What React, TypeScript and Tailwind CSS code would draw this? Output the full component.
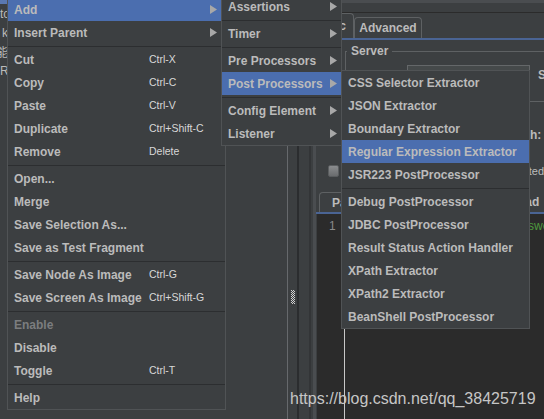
import React from "react";

type Entry = {
  label: string;
  shortcut?: string;
  sub?: boolean;
  active?: boolean;
  disabled?: boolean;
} | null;

const mainItems: Entry[] = [
  { label: "Add", sub: true, active: true },
  { label: "Insert Parent", sub: true },
  null,
  { label: "Cut", shortcut: "Ctrl-X" },
  { label: "Copy", shortcut: "Ctrl-C" },
  { label: "Paste", shortcut: "Ctrl-V" },
  { label: "Duplicate", shortcut: "Ctrl+Shift-C" },
  { label: "Remove", shortcut: "Delete" },
  null,
  { label: "Open..." },
  { label: "Merge" },
  { label: "Save Selection As..." },
  { label: "Save as Test Fragment" },
  null,
  { label: "Save Node As Image", shortcut: "Ctrl-G" },
  { label: "Save Screen As Image", shortcut: "Ctrl+Shift-G" },
  null,
  { label: "Enable", disabled: true },
  { label: "Disable" },
  { label: "Toggle", shortcut: "Ctrl-T" },
  null,
  { label: "Help" },
];

const addItems: Entry[] = [
  { label: "Assertions", sub: true },
  null,
  { label: "Timer", sub: true },
  null,
  { label: "Pre Processors", sub: true },
  { label: "Post Processors", sub: true, active: true },
  null,
  { label: "Config Element", sub: true },
  { label: "Listener", sub: true },
];

const postItems: Entry[] = [
  { label: "CSS Selector Extractor" },
  { label: "JSON Extractor" },
  { label: "Boundary Extractor" },
  { label: "Regular Expression Extractor", active: true },
  { label: "JSR223 PostProcessor" },
  null,
  { label: "Debug PostProcessor" },
  { label: "JDBC PostProcessor" },
  { label: "Result Status Action Handler" },
  { label: "XPath Extractor" },
  { label: "XPath2 Extractor" },
  { label: "BeanShell PostProcessor" },
];

const font = "font-['Liberation_Sans',Arial,sans-serif]";

function Arrow() {
  return (
    <svg width="7" height="9" viewBox="0 0 7 9" className="ml-auto shrink-0">
      <path d="M0 0L7 4.5L0 9Z" fill="#a8a8a8" />
    </svg>
  );
}

function Menu({ items, box, labelW, pr }: { items: Entry[]; box: string; labelW: string; pr: string }) {
  return (
    <div className={`absolute flex flex-col border border-[#505355] bg-[#3c3f41] ${box}`}>
      {items.map((e, i) =>
        e === null ? (
          <div key={i} className="h-[4px] pt-[2px]">
            <div className="h-px bg-[#2c2e30]" />
          </div>
        ) : (
          <div
            key={i}
            className={`flex h-[23px] shrink-0 items-center pl-[6px] ${pr} ${e.active ? "bg-[#4b6eaf]" : ""}`}
          >
            <span
              className={`${labelW} shrink-0 whitespace-nowrap text-[12px] font-bold ${
                e.disabled ? "text-[#7b7d7f]" : "text-[#bbbbbb]"
              }`}
            >
              {e.label}
            </span>
            {e.shortcut && <span className="whitespace-nowrap text-[10.5px] text-[#d8d8d8]">{e.shortcut}</span>}
            {e.sub && <Arrow />}
          </div>
        )
      )}
    </div>
  );
}

function Grip() {
  const dots = [];
  for (let y = 0; y < 14; y++) {
    for (let x = 0; x < 4; x++) {
      if ((x + y) % 2 === 0) dots.push(<rect key={`${x}-${y}`} x={x} y={y} width="1" height="1" fill="#d0d0d0" />);
    }
  }
  return (
    <svg width="4" height="14" viewBox="0 0 4 14">
      {dots}
    </svg>
  );
}

export default function App() {
  return (
    <div className={`relative flex h-[419px] w-[544px] overflow-hidden bg-[#3c3f41] ${font}`}>
      {/* tree strip, cut off by the menu */}
      <div className="flex w-[7px] shrink-0 flex-col overflow-hidden text-[12px] text-[#bbbbbb]">
        <div className="h-[4px] bg-[#5a78b0]" />
        <div className="flex h-[19px] items-center whitespace-nowrap">to</div>
        <div className="flex h-[19px] items-center whitespace-nowrap pl-[2px]">k</div>
        <div className="flex h-[19px] items-center whitespace-nowrap ml-[-4px] font-['Noto_Sans_CJK_SC',sans-serif]">能</div>
        <div className="flex h-[19px] items-center whitespace-nowrap">Re</div>
      </div>

      {/* tree panel */}
      <div className="w-[280px] shrink-0 bg-[#3c3f41]" />

      {/* split bar */}
      <div className="flex w-[29px] shrink-0">
        <div className="w-px bg-[#66696c]" />
        <div className="flex w-[9px] justify-center pt-[290px]">
          <Grip />
        </div>
        <div className="w-[2px] bg-[#2b2d2f]" />
        <div className="w-[10px]" />
        <div className="w-[2px] bg-[#333537]" />
        <div className="w-[2px]" />
        <div className="w-[3px] bg-[#4a4d50]" />
      </div>

      {/* sampler panel */}
      <div className="flex min-w-0 flex-1 flex-col overflow-hidden text-[12px] text-[#bbbbbb]">
        <div className="h-[3px] bg-[#4a4d50]" />
        <div className="h-[9px]" />
        <div className="h-px bg-[#2b2b2b]" />
        <div className="flex h-[25px] items-end">
          <div className="flex h-[25px] w-[38px] items-center justify-end overflow-hidden rounded-tr-[4px] border-r border-t border-[#5e6163] pr-[7px] font-bold">
            Basic
          </div>
          <div className="flex h-[21px] w-[68px] items-center justify-center rounded-t-[4px] border border-b-0 border-[#5e6163] font-bold">
            Advanced
          </div>
        </div>
        <div className="h-[2px] bg-[#4a6494]" />

        <fieldset className="mr-[-10px] ml-[29px] mt-[2px] border border-[#5e6163] px-0 pb-[16px]">
          <legend className="ml-px px-[4px] text-[12px] font-bold">Server</legend>
          <div className="mt-[5px] flex h-[20px] items-center">
            <span className="w-[61px] overflow-hidden whitespace-nowrap text-right font-bold">col [http]:</span>
            <div className="h-[20px] w-[123px] border border-[#646769] bg-[#45494a]" />
            <span className="ml-[8px] whitespace-nowrap font-bold">Server Name</span>
          </div>
        </fieldset>

        <div className="mt-[23px] flex h-[20px] items-center whitespace-nowrap pl-[214px] font-bold">h:</div>
        <div className="mt-[19px] flex h-[14px] items-center whitespace-nowrap">
          <div className="ml-[12px] h-[12px] w-[13px] rounded-[2px] border border-[#5a5d5f] bg-gradient-to-b from-[#8a8c8e] to-[#6a6c6e]" />
          <span className="ml-[190px] text-[11px]">ted</span>
        </div>

        <div className="mt-[14px] flex h-[20px] items-end whitespace-nowrap font-bold">
          <div className="ml-[3px] flex h-[20px] w-[94px] shrink-0 items-center rounded-t-[4px] border border-b-0 border-[#5e6163] pl-[12px]">
            Parameters
          </div>
          <div className="flex h-[20px] w-[48px] shrink-0 items-center overflow-hidden border-t border-r border-[#5e6163] pl-[8px]">
            Body
          </div>
          <div className="flex h-[20px] shrink-0 items-center pl-[7px]">Files Upload</div>
        </div>
        <div className="h-[2px] bg-[#4a6494]" />

        <div className="ml-px flex flex-1 bg-[#2b2b2b]">
          <div className="w-[28px] shrink-0 border-r border-[#c8c8c8] pl-[12px] pt-[3px] text-[12px] text-[#8a8a8a]">1</div>
          <div className="whitespace-nowrap pl-[183px] pt-[3px] text-[12px] text-[#4e9a3e]">swe</div>
        </div>
      </div>

      <Menu items={mainItems} box="left-[7px] top-[-3px] w-[219px]" labelW="w-[135px]" pr="pr-[8px]" />
      <Menu items={addItems} box="left-[221px] top-[-6px] w-[121px]" labelW="" pr="pr-[4px]" />
      <Menu items={postItems} box="left-[341px] top-[70px] w-[189px]" labelW="" pr="pr-[4px]" />

      <div className="absolute left-[290px] top-[391px] whitespace-nowrap text-[16px] leading-none text-[#c6c6c6]">
        https://blog.csdn.net/qq_38425719
      </div>
    </div>
  );
}
